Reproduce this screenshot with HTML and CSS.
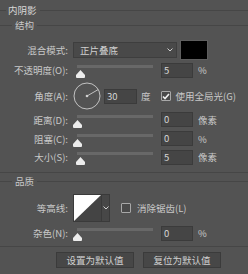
FILE: index.html
```html
<!DOCTYPE html>
<html lang="zh-CN">
<head>
  <meta charset="UTF-8">
  <title>内阴影</title>
  <link rel="stylesheet" href="styles.css">
</head>
<body>
  <div class="panel">
    <div class="heading title"><span>内阴影</span></div>

    <section class="group structure">
      <div class="heading sub"><span>结构</span></div>

      <div class="row row-blend">
        <span class="label">混合模式:</span>
        <div class="select">
          <span>正片叠底</span>
          <svg class="chev" width="6" height="4" viewBox="0 0 6 4"><path d="M0.5 0.5 L3 3 L5.5 0.5" fill="none" stroke="#cfcfcf" stroke-width="1"/></svg>
        </div>
        <div class="swatch"></div>
      </div>

      <div class="row">
        <span class="label">不透明度(O):</span>
        <div class="slider"><div class="rail"><svg class="thumb" style="left: 5%" width="9" height="8" viewBox="0 0 9 8"><path d="M4.5 0 L9 5 L9 7 Q9 8 8 8 L1 8 Q0 8 0 7 L0 5 Z" fill="#ececec"/></svg></div></div>
        <div class="field">5</div><span class="unit">%</span>
      </div>

      <div class="row row-angle">
        <span class="label">角度(A):</span>
        <svg class="dial" width="28" height="28" viewBox="0 0 28 28">
          <circle cx="14" cy="14" r="13" fill="none" stroke="#c2c2c2" stroke-width="1"/>
          <line x1="14" y1="14" x2="25.3" y2="7.5" stroke="#c2c2c2" stroke-width="1"/>
          <circle cx="14" cy="14" r="1.3" fill="#d0d0d0"/>
        </svg>
        <div class="field field-angle">30</div><span class="unit unit-deg">度</span>
        <span class="check checked"><svg width="8" height="7" viewBox="0 0 8 7"><path d="M1 3.5 L3 5.5 L7 1" fill="none" stroke="#f0f0f0" stroke-width="1.6"/></svg></span>
        <span class="check-label">使用全局光(G)</span>
      </div>

      <div class="row row-distance">
        <span class="label">距离(D):</span>
        <div class="slider"><div class="rail"><svg class="thumb" style="left: 0%" width="9" height="8" viewBox="0 0 9 8"><path d="M4.5 0 L9 5 L9 7 Q9 8 8 8 L1 8 Q0 8 0 7 L0 5 Z" fill="#ececec"/></svg></div></div>
        <div class="field">0</div><span class="unit">像素</span>
      </div>

      <div class="row row-choke">
        <span class="label">阻塞(C):</span>
        <div class="slider"><div class="rail"><svg class="thumb" style="left: 0%" width="9" height="8" viewBox="0 0 9 8"><path d="M4.5 0 L9 5 L9 7 Q9 8 8 8 L1 8 Q0 8 0 7 L0 5 Z" fill="#ececec"/></svg></div></div>
        <div class="field">0</div><span class="unit">%</span>
      </div>

      <div class="row row-size">
        <span class="label">大小(S):</span>
        <div class="slider"><div class="rail"><svg class="thumb" style="left: 5%" width="9" height="8" viewBox="0 0 9 8"><path d="M4.5 0 L9 5 L9 7 Q9 8 8 8 L1 8 Q0 8 0 7 L0 5 Z" fill="#ececec"/></svg></div></div>
        <div class="field">5</div><span class="unit">像素</span>
      </div>
    </section>

    <section class="group quality">
      <div class="heading sub"><span>品质</span></div>

      <div class="row row-contour">
        <span class="label">等高线:</span>
        <div class="contour">
          <svg class="contour-preview" width="27" height="28" viewBox="0 0 27 28" preserveAspectRatio="none">
            <rect width="27" height="28" fill="#444"/>
            <path d="M0 0 L27 0 L0 28 Z" fill="#ffffff"/>
          </svg>
          <div class="contour-arrow">
            <svg width="6" height="4" viewBox="0 0 6 4"><path d="M0.5 0.5 L3 3 L5.5 0.5" fill="none" stroke="#cfcfcf" stroke-width="1"/></svg>
          </div>
        </div>
        <span class="check"></span>
        <span class="check-label">消除锯齿(L)</span>
      </div>

      <div class="row row-noise">
        <span class="label">杂色(N):</span>
        <div class="slider"><div class="rail"><svg class="thumb" style="left: 0%" width="9" height="8" viewBox="0 0 9 8"><path d="M4.5 0 L9 5 L9 7 Q9 8 8 8 L1 8 Q0 8 0 7 L0 5 Z" fill="#ececec"/></svg></div></div>
        <div class="field">0</div><span class="unit">%</span>
      </div>
    </section>

    <div class="buttons">
      <button class="btn">设置为默认值</button>
      <button class="btn">复位为默认值</button>
    </div>
  </div>
</body>
</html>
```

FILE: styles.css
```css
body {
  margin: 0;
  background-color: #535353;
  font-family: "Noto Sans CJK SC", "Noto Sans", sans-serif;
  font-size: 9.5px;
  color: #c8c8c8;
  width: 248px;
  height: 274px;
  overflow: hidden;
}

.heading {
  display: flex;
  align-items: center;
  height: 20px;
}

.heading::before,
.heading::after {
  content: "";
  height: 1px;
  background: #464646;
}

.heading::before {
  width: 6px;
  margin-right: 2px;
}

.heading::after {
  flex: 1;
  margin-left: 3px;
}

.title {
  color: #d8d8d8;
}

.heading.sub {
  height: 10px;
}

.heading.sub::before {
  width: 12px;
  margin-right: 3px;
}

.group {
  border-bottom: 1px solid #464646;
}

.structure {
  padding-bottom: 6px;
}

.quality {
  padding-bottom: 4px;
}

.quality .heading.sub {
  margin-top: 3px;
}

.row {
  display: flex;
  align-items: center;
  height: 20px;
}

.label {
  flex: none;
  width: 68px;
  margin-right: 5px;
  text-align: right;
  white-space: nowrap;
}

.row-blend {
  margin-top: 10px;
}

.row-angle {
  height: 28px;
  margin-top: 2px;
}

.row-distance,
.row-choke {
  height: 19px;
}

.row-size {
  height: 18px;
}

.row-contour {
  height: 28px;
  margin-top: 8px;
}

.row-noise {
  height: 18px;
  margin-top: 2px;
}

/* blend mode */
.select {
  box-sizing: border-box;
  width: 104px;
  height: 16px;
  padding: 0 3px 0 6px;
  display: flex;
  align-items: center;
  justify-content: space-between;
  background: #494949;
  border: 1px solid #3e3e3e;
  color: #d0d0d0;
}

.swatch {
  box-sizing: border-box;
  width: 28px;
  height: 20px;
  margin-left: 3px;
  background: #000;
  border: 1px solid #5e5e5e;
}

/* sliders */
.slider {
  flex: none;
  box-sizing: border-box;
  width: 80px;
  height: 14px;
  padding-left: 4px;
}

.rail {
  position: relative;
  height: 3px;
  margin-top: 2px;
  background: #686868;
}

.thumb {
  position: absolute;
  top: 5px;
  margin-left: -4.5px;
}

.field {
  flex: none;
  box-sizing: border-box;
  width: 32px;
  height: 15px;
  margin-left: 8px;
  padding-left: 2px;
  line-height: 13px;
  background: #454545;
  border: 1px solid #3b3b3b;
  color: #d6d6d6;
}

.unit {
  margin-left: 5px;
}

/* angle */
.dial {
  flex: none;
}

.field-angle {
  width: 33px;
  margin-left: 3px;
}

.unit-deg {
  margin-left: 4px;
}

.check {
  flex: none;
  box-sizing: border-box;
  width: 10px;
  height: 10px;
  margin-left: 10px;
  border: 1px solid #a8a8a8;
  border-radius: 1px;
  background: #4a4a4a;
  display: flex;
  align-items: center;
  justify-content: center;
}

.check-label {
  margin-left: 5px;
  white-space: nowrap;
}

/* contour */
.contour {
  flex: none;
  box-sizing: border-box;
  width: 37px;
  height: 28px;
  display: flex;
  border: 1px solid #3a3a3a;
}

.contour-preview {
  display: block;
  width: 27px;
  height: 26px;
}

.contour-arrow {
  flex: 1;
  display: flex;
  align-items: center;
  justify-content: center;
  background: #474747;
  border-left: 1px solid #3a3a3a;
}

.row-contour .check {
  margin-left: 11px;
}

.row-contour .check-label {
  margin-left: 6px;
}

/* buttons */
.buttons {
  display: flex;
  justify-content: flex-end;
  gap: 9px;
  margin-top: 5px;
  padding-right: 27px;
}

.btn {
  box-sizing: border-box;
  width: 78px;
  height: 16px;
  padding: 0;
  font-family: inherit;
  font-size: 9.5px;
  color: #d0d0d0;
  background: #474747;
  border: 1px solid #3b3b3b;
  border-radius: 0;
}
```
